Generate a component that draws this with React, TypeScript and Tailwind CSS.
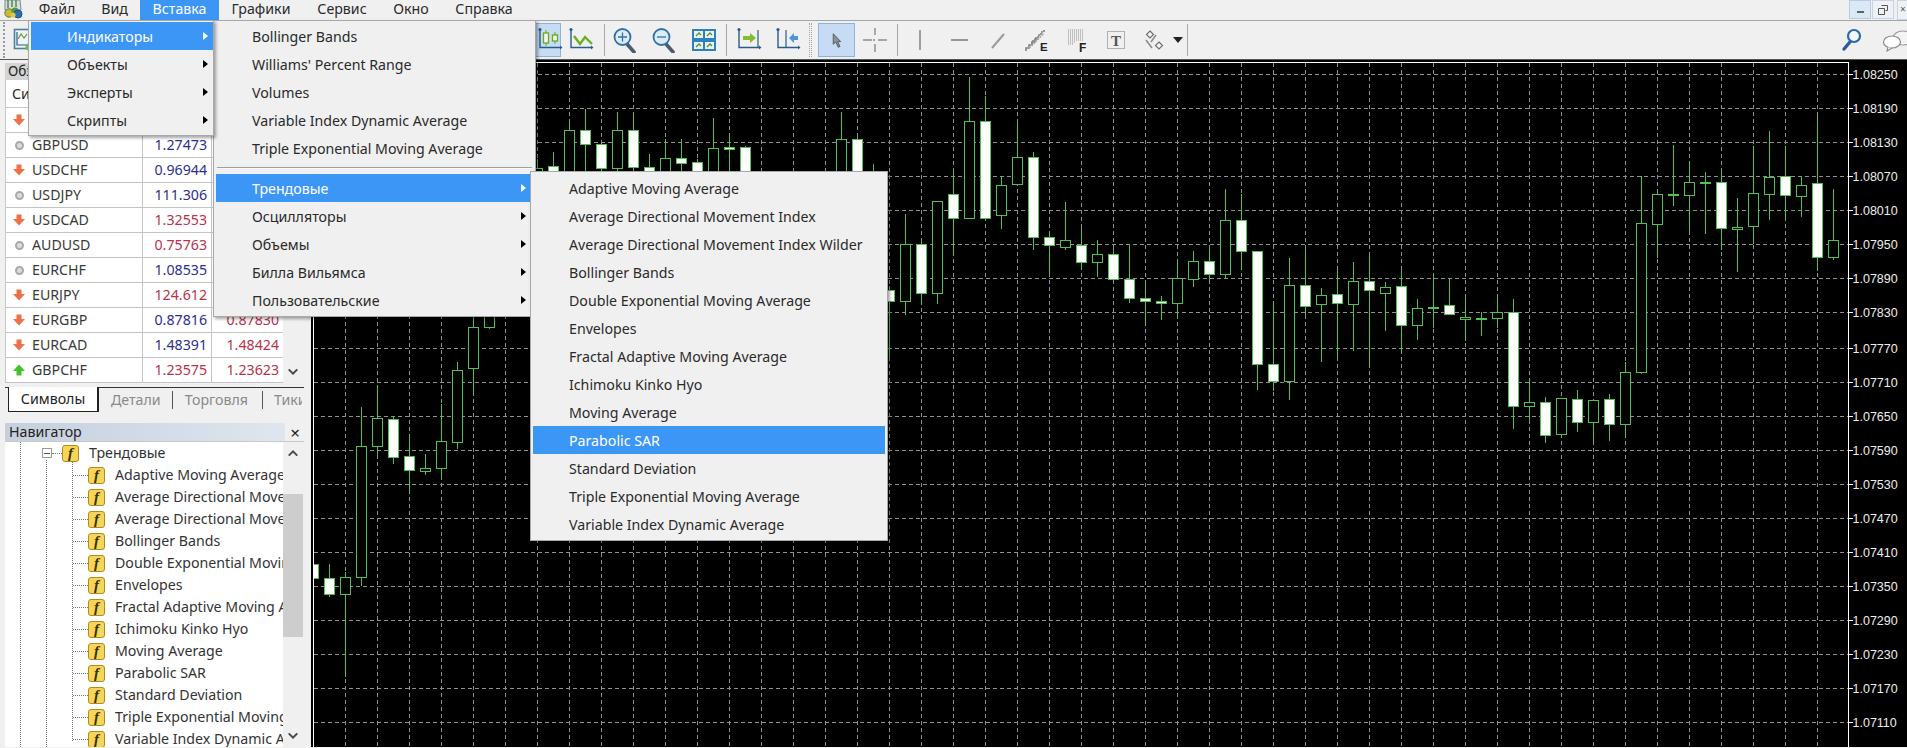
import React from "react";

type C = [number, number, number, number, number, number];
const z6: C[] = [
  [537, 300, 328, 400, 420, 0],[553, 280, 322, 400, 420, 1],[569, 180, 213, 400, 420, 0],[585, 150, 213, 256, 400, 1],
  [601, 250, 256, 328, 360, 1],[617, 160, 213, 328, 360, 0],[633, 165, 213, 325, 360, 1],[649, 285, 325, 400, 420, 1],
  [665, 240, 298, 400, 420, 0],[681, 240, 298, 313, 400, 1],[697, 300, 310, 400, 420, 1],[713, 178, 268, 400, 420, 0],
  [729, 222, 265, 271, 400, 1],[745, 260, 265, 400, 420, 1],[841, 160, 241, 400, 420, 0],[857, 235, 241, 400, 420, 1],
  [873, 315, 400, 420, 440, 0],[473, 740, 805, 928, 1005, 0],[489, 700, 720, 805, 810, 0],[457, 908, 935, 1150, 1170, 0],
];
const z7: C[] = [
  [313, 430, 495, 538, 560, 1],[329, 495, 538, 586, 594, 1],[345, 520, 535, 586, 835, 0],[361, 25, 143, 535, 560, 0],[377, -40, 58, 142, 168, 0],
  [393, 50, 62, 175, 194, 1],[409, 107, 172, 214, 275, 1],[425, 165, 208, 217, 228, 0],[441, 15, 128, 208, 238, 0],
];
const z8: C[] = [
  [889, 680, 695, 727, 900, 1],[905, 465, 556, 727, 768, 0],[921, 545, 556, 703, 738, 1],[937, 427, 427, 703, 735, 0],[953, 328, 406, 478, 592, 1],
  [969, 55, 187, 478, 478, 0],[985, 110, 187, 478, 486, 1],[1001, 350, 379, 469, 510, 0],[1017, 190, 295, 377, 377, 0],[1033, 278, 295, 535, 572, 1],
  [1049, 515, 535, 559, 647, 1],[1065, 430, 544, 566, 572, 0],[1081, 507, 559, 610, 632, 1],[1097, 544, 586, 610, 655, 0],[1113, 570, 586, 661, 664, 1],
  [1129, 556, 661, 718, 732, 1],[1145, 676, 718, 727, 792, 1],[1161, 712, 727, 733, 783, 1],[1177, 604, 658, 733, 772, 0],[1193, 577, 607, 661, 684, 0],
  [1209, 560, 607, 646, 668, 1],[1225, 390, 484, 646, 658, 0],[1241, 406, 484, 577, 632, 1],[1257, 577, 577, 916, 992, 1],[1273, 727, 916, 967, 997, 1],
  [1289, 598, 679, 967, 1022, 0],[1305, 568, 679, 742, 772, 1],[1321, 688, 709, 736, 910, 0],[1337, 634, 706, 733, 898, 1],[1353, 610, 667, 736, 875, 0],
  [1369, 584, 667, 694, 922, 1],[1385, 670, 685, 703, 815, 0],[1401, 634, 682, 799, 885, 1],[1417, 720, 748, 799, 843, 0],[1433, 652, 745, 748, 808, 1],
  [1449, 658, 739, 766, 766, 1],[1465, 712, 775, 781, 845, 0],[1481, 760, 778, 778, 832, 0],[1497, 712, 760, 778, 808, 0],[1513, 720, 760, 1042, 1110, 1],
  [1529, 962, 1030, 1042, 1082, 0],[1545, 1015, 1030, 1129, 1153, 1],[1561, 1018, 1018, 1126, 1130, 0],[1577, 992, 1021, 1090, 1120, 1],[1593, 1024, 1024, 1090, 1150, 0],
  [1609, 1005, 1021, 1096, 1145, 1],[1625, 910, 940, 1096, 1135, 0],[1641, 352, 493, 940, 946, 0],[1657, 390, 406, 496, 598, 0],[1673, 258, 406, 409, 440, 1],
  [1689, 316, 370, 409, 520, 0],[1705, 340, 370, 373, 526, 1],[1721, 334, 370, 508, 574, 1],[1737, 418, 505, 511, 640, 0],[1753, 262, 403, 502, 556, 0],
  [1769, 216, 355, 406, 484, 0],[1785, 262, 352, 409, 487, 1],[1801, 352, 379, 412, 474, 0],[1817, 168, 373, 595, 636, 1],[1833, 390, 544, 596, 604, 0],
];
const candles: C[] = [
  ...z6.map(([x, h, t, b, l, f]): C => [x, 60 + h / 3, 60 + t / 3, 60 + b / 3, 60 + l / 3, f]),
  ...z7.map(([x, h, t, b, l, f]): C => [x, 400 + h / 3, 400 + t / 3, 400 + b / 3, 400 + l / 3, f]),
  ...z8.map(([x, h, t, b, l, f]): C => [x, 60 + h / 3, 60 + t / 3, 60 + b / 3, 60 + l / 3, f]),
];
const gridY = [75, 109, 143, 177, 211, 245, 279, 313, 349, 383, 417, 451, 485, 519, 553, 587, 621, 655, 689, 723];
const prices = ["1.08250","1.08190","1.08130","1.08070","1.08010","1.07950","1.07890","1.07830","1.07770","1.07710","1.07650","1.07590","1.07530","1.07470","1.07410","1.07350","1.07290","1.07230","1.07170","1.07110"];
const gridX = Array.from({ length: 47 }, (_, i) => 345.5 + 32 * i);

function Chart() {
  return (
    <svg viewBox="311 61 1596 687" width="1596" height="687" className="block bg-black">
      <defs><clipPath id="plot"><rect x="314" y="64" width="1534" height="684" /></clipPath></defs>
      <g stroke="#8f8f8f" strokeWidth="1" strokeDasharray="4 3" shapeRendering="crispEdges">
        {gridY.map((y) => <line key={y} x1="314" x2="1848" y1={y + 0.5} y2={y + 0.5} />)}
        {gridX.map((x) => <line key={x} x1={x} x2={x} y1="64" y2="748" />)}
      </g>
      <g clipPath="url(#plot)" shapeRendering="crispEdges">
        {candles.map(([x, h, t, b, l, f]) => (
          <g key={x}>
            <line x1={x + 0.5} x2={x + 0.5} y1={h} y2={l} stroke="#4fc24f" strokeWidth="1" />
            <rect x={x - 4.5} y={t} width="10" height={Math.max(b - t, 1)} fill={f ? "#ffffff" : "#000000"} stroke="#4fc24f" strokeWidth="1" />
          </g>
        ))}
      </g>
      <g stroke="#ffffff" shapeRendering="crispEdges">
        <line x1="313.5" x2="313.5" y1="63" y2="748" />
        <line x1="313" x2="1849" y1="63.5" y2="63.5" />
        <line x1="1848.5" x2="1848.5" y1="63" y2="748" />
        {gridY.map((y) => <line key={y} x1="1848" x2="1853" y1={y + 0.5} y2={y + 0.5} />)}
      </g>
      <g fill="#ededed" fontFamily="'Liberation Sans', sans-serif" fontSize="12.5">
        {gridY.map((y, i) => <text key={y} x="1852.5" y={y + 5}>{prices[i]}</text>)}
      </g>
    </svg>
  );
}

const Axis = () => (
  <g>
    <path d="M3 2.5V20.5H23" fill="none" stroke="#2a5a8f" strokeWidth="1.4" />
    <circle cx="3" cy="2.5" r="1.6" fill="#2a5a8f" />
    <path d="M23 18.5l2.5 2-2.5 2z" fill="#2a5a8f" />
  </g>
);
const Ic = ({ children, w = 26, h = 26 }: { children: React.ReactNode; w?: number; h?: number }) => (
  <svg viewBox={`0 0 ${w} ${h}`} width={w} height={h}>{children}</svg>
);
const CandleIc = () => (
  <Ic><Axis />
    <path d="M9 3v3M9 16v3M18 5v3M18 14v3" stroke="#69a81f" />
    <rect x="6.5" y="6" width="5" height="10" fill="#f4fae8" stroke="#69a81f" strokeWidth="1.3" />
    <rect x="15.5" y="8" width="5" height="6" fill="#f4fae8" stroke="#69a81f" strokeWidth="1.3" />
  </Ic>
);
const LineIc = () => (
  <Ic><Axis /><path d="M6 9l6 8 5-7 7 7" fill="none" stroke="#69b01f" strokeWidth="2.4" /></Ic>
);
const ZoomIc = ({ plus }: { plus?: boolean }) => (
  <Ic>
    <path d="M15 17l7 8" stroke="#4c5c6e" strokeWidth="3.6" strokeLinecap="round" />
    <circle cx="10.5" cy="10" r="8" fill="#dcebf8" stroke="#2f70a8" strokeWidth="1.8" />
    <path d={plus ? "M6 10h9M10.5 5.5v9" : "M6 10h9"} stroke="#2f70a8" strokeWidth="1.3" />
  </Ic>
);
const TileIc = () => (
  <Ic>
    <rect x="1" y="2" width="24" height="22" fill="#2f82c0" />
    <rect x="3" y="4" width="9" height="7" fill="#e8f3f7" /><rect x="14" y="4" width="9" height="7" fill="#e8f3f7" />
    <rect x="3" y="15" width="9" height="7" fill="#e8f3f7" /><rect x="14" y="15" width="9" height="7" fill="#e8f3f7" />
    <path d="M5 9l3-3 2 2M16 9l3-3 2 2M5 20l3-3 2 2M16 20l3-3 2 2" fill="none" stroke="#55902a" strokeWidth="1.3" />
  </Ic>
);
const ShiftIc = () => (
  <Ic><Axis /><path d="M22 3v17" stroke="#2a5a8f" strokeWidth="1.2" /><path d="M7 9h7V6l6 5-6 5v-3H7z" fill="#84bd2d" /></Ic>
);
const ScrollIc = () => (
  <Ic><Axis /><path d="M11 3v17" stroke="#2a5a8f" strokeWidth="1.2" /><path d="M23 9h-4V6l-5 5 5 5v-3h4z" fill="#4d96d9" /></Ic>
);
const CursorIc = () => (
  <svg viewBox="0 0 16 22" width="12" height="17"><path d="M3 2v14l3.5-3 3 7 2.5-1-3-6.5H13z" fill="#8a9199" stroke="#4f565e" strokeWidth="1.2" /></svg>
);
const CrossIc = () => (
  <Ic><path d="M13 1v7M13 17v8M1 13h9M16 13h9" stroke="#8b8b8b" strokeWidth="1.4" /><path d="M11 13h2" stroke="#8b8b8b" strokeWidth="1.4" /></Ic>
);
const FuncIcon = () => (
  <span className="flex h-[17px] w-[17px] shrink-0 items-center justify-center rounded-[3px] border border-[#b58a16] bg-[#f5d65a] [font-family:'Liberation_Serif',serif] text-[15px] font-bold italic leading-none text-[#3a3000]">f</span>
);

const Sep = () => <span className="mx-auto block h-[32px] w-px bg-[#a8a8a8]" />;
const Slot = ({ w, children }: { w: string; children?: React.ReactNode }) => (
  <div className={`flex h-[34px] shrink-0 items-center justify-center ${w}`}>{children}</div>
);

function Toolbar() {
  return (
    <div className="flex h-[39px] items-center border-t border-[#a6a6a6] bg-[#f0f0f0]">
      <span className="ml-[3px] block h-[36px] w-0 shrink-0 border-l-2 border-dotted border-[#9a9a9a]" />
      <div className="ml-[8px] shrink-0">
        <svg viewBox="0 0 19 24" width="19" height="24">
          <rect x="1.5" y="1.5" width="15" height="19" fill="#eef4f8" stroke="#4f7f9e" strokeWidth="1.6" />
          <path d="M4 4v13h10" fill="none" stroke="#2a5a8f" strokeWidth="1.2" />
          <path d="M5 11l3-5 3 4 3-4" fill="none" stroke="#5f9a2a" strokeWidth="1.2" />
          <circle cx="16" cy="19" r="3.5" fill="#6cbf3a" />
        </svg>
      </div>
      <div className="w-[493px] shrink-0" />
      <Slot w="w-[36px] border border-[#8fb4dc] bg-[#c6dcf4]"><div className="ml-[14px]"><CandleIc /></div></Slot>
      <Slot w="w-[40px]"><LineIc /></Slot>
      <Slot w="w-[6px]"><Sep /></Slot>
      <Slot w="w-[36px]"><ZoomIc plus /></Slot>
      <Slot w="w-[42px]"><ZoomIc /></Slot>
      <Slot w="w-[38px]"><TileIc /></Slot>
      <Slot w="w-[6px]"><Sep /></Slot>
      <Slot w="w-[40px]"><ShiftIc /></Slot>
      <Slot w="w-[38px]"><ScrollIc /></Slot>
      <Slot w="w-[6px]"><span className="block h-[34px] w-[3px] border-l border-r border-dotted border-[#a8a8a8]" /></Slot>
      <div className="w-[5px] shrink-0" />
      <Slot w="w-[37px] border border-[#8fb4dc] bg-[#c6dcf4]"><CursorIc /></Slot>
      <Slot w="w-[40px]"><CrossIc /></Slot>
      <Slot w="w-[4px]"><Sep /></Slot>
      <Slot w="w-[42px]"><span className="block h-[20px] w-[2px] bg-[#a0a0a0]" /></Slot>
      <Slot w="w-[36px]"><span className="block h-[2px] w-[17px] bg-[#969696]" /></Slot>
      <Slot w="w-[42px]"><Ic><path d="M7 21L19 7" stroke="#9a9a9a" strokeWidth="2" /></Ic></Slot>
      <Slot w="w-[38px]">
        <Ic>
          <path d="M1 24v-3h3v-3h3v-3h3v-3h3" fill="none" stroke="#808080" strokeWidth="1.6" />
          <path d="M7 17v-3h3v-3h3V8h3V5h3V2" fill="none" stroke="#808080" strokeWidth="1.6" strokeDasharray="2 1" />
          <path d="M4 21L19 6" stroke="#a8a8a8" strokeWidth="2" strokeDasharray="2 1" />
          <text x="15" y="24" fontSize="11.5" fontWeight="700" fontFamily="'Liberation Sans', sans-serif" fill="#222">E</text>
        </Ic>
      </Slot>
      <Slot w="w-[39px]">
        <Ic>
          <path d="M4 3h15M4 5h15M4 7h15M4 9h15M4 11h15M4 13h15M4 15h8M4 17h6" stroke="#8f8f8f" strokeDasharray="1 1" />
          <text x="15" y="25" fontSize="12" fontWeight="700" fontFamily="'Liberation Sans', sans-serif" fill="#222">F</text>
        </Ic>
      </Slot>
      <Slot w="w-[40px]">
        <Ic>
          <rect x="4.5" y="4.5" width="17" height="17" fill="none" stroke="#707070" strokeDasharray="1 1" />
          <text x="13" y="18.5" textAnchor="middle" fontSize="15" fontWeight="700" fontFamily="'Liberation Serif', serif" fill="#555">T</text>
        </Ic>
      </Slot>
      <Slot w="w-[36px]">
        <Ic>
          <path d="M9 4l3.5 3.5L9 11 5.500 7.500zM18 15l3.500 3.500L18 22l-3.500-3.500z" fill="#f4f4f4" stroke="#6f6f6f" strokeWidth="1.2" />
          <path d="M5 13l6 8M15 8l-5 7" stroke="#8a8a8a" strokeWidth="1.5" />
        </Ic>
      </Slot>
      <Slot w="w-[12px]"><span className="block h-0 w-0 border-x-[5px] border-t-[6px] border-x-transparent border-t-[#222]" /></Slot>
      <Slot w="w-[6px]"><Sep /></Slot>
      <div className="flex-1" />
      <div className="shrink-0">
        <Ic>
          <path d="M11 15l-6 7" stroke="#2c5a9a" strokeWidth="3.4" strokeLinecap="round" />
          <circle cx="15" cy="9" r="6" fill="#f4f8fb" stroke="#2c68ac" strokeWidth="2.2" />
        </Ic>
      </div>
      <div className="w-[17px] shrink-0" />
      <div className="w-[25px] shrink-0 overflow-hidden">
        <svg viewBox="0 0 34 24" width="34" height="24">
          <ellipse cx="21" cy="10" rx="10" ry="7" fill="#f4f4f4" stroke="#9a9a9a" strokeWidth="1.2" />
          <ellipse cx="10" cy="14" rx="8.5" ry="6" fill="#ffffff" stroke="#8a8a8a" strokeWidth="1.2" />
          <path d="M6 19l-1 4 5-3" fill="#fff" stroke="#8a8a8a" strokeWidth="1.1" />
        </svg>
      </div>
    </div>
  );
}

function MenuBar() {
  const items = [
    { t: "Файл", w: "w-[64px]" },
    { t: "Вид", w: "w-[51px]" },
    { t: "Вставка", w: "w-[79px] bg-[#3c96f5] text-white" },
    { t: "Графики", w: "w-[84px]" },
    { t: "Сервис", w: "w-[78px]" },
    { t: "Окно", w: "w-[60px]" },
    { t: "Справка", w: "w-[86px]" },
  ];
  return (
    <div className="flex h-[20px] items-stretch bg-[#f0f0f0] text-[14.2px] leading-[17px] text-[#2a2a2a]">
      <div className="w-[25px] shrink-0">
        <svg viewBox="0 0 26 20" width="26" height="20">
          <path d="M5 0h15l1 10H5z" fill="#d8dde0" stroke="#7c8790" strokeWidth="1" />
          <path d="M8 0v8M12 0v7M16 0v7" stroke="#5c8f50" strokeWidth="1.6" />
          <circle cx="9" cy="13" r="4.2" fill="#c9b93a" stroke="#5f7f3a" />
          <circle cx="15" cy="11" r="3.600" fill="#4f9a3a" />
          <circle cx="18" cy="14" r="4" fill="#2e6fb0" stroke="#244f80" />
          <circle cx="13" cy="15" r="2.600" fill="#e0c93f" />
        </svg>
      </div>
      {items.map((m) => (
        <div key={m.t} className={`flex shrink-0 justify-center ${m.w}`}>{m.t}</div>
      ))}
      <div className="flex-1" />
      <div className="flex h-[19px] w-[22px] items-center justify-center border border-[#b8cbe0] bg-[#dbe8f5] text-[#555]"><span className="mt-[5px] block h-[2px] w-[7px] bg-[#566]" /></div>
      <div className="ml-[1px] flex h-[19px] w-[22px] items-center justify-center border border-[#c8d4e0] bg-[#eef2f6]">
        <svg viewBox="0 0 10 10" width="10" height="10"><path d="M3.5 .5h6v5h-2M.5 3.5h6v6h-6z" fill="none" stroke="#555" /></svg>
      </div>
      <div className="ml-[3px] w-[10px] overflow-hidden border-y border-l border-[#c8d4e0] bg-[#eef2f6] pl-[2px] text-[10px] leading-[16px] text-[#555]">×</div>
    </div>
  );
}

const IndRow = ({ children, h = false, arrow = false, w }: { children: React.ReactNode; h?: boolean; arrow?: boolean; w: string }) => (
  <div className={`flex h-[28px] items-center justify-between ${h ? "bg-[#3c96f5] text-white" : "text-[#2a2a2a]"} ${w}`}>
    <span className="whitespace-nowrap pt-[2px]">{children}</span>
    {arrow && <span className={`mr-[5px] block h-0 w-0 border-y-[4.5px] border-l-[5px] border-y-transparent ${h ? "border-l-white" : "border-l-black"}`} />}
  </div>
);
const MenuBox = ({ className, children }: { className: string; children: React.ReactNode }) => (
  <div className={`absolute z-10 border border-[#a8a8a8] bg-[#f0f0f0] text-[14.2px] shadow-[2px_2px_3px_rgba(0,0,0,0.35)] ${className}`}>{children}</div>
);

function Menus() {
  return (
    <>
      <MenuBox className="left-[28px] top-[20px] h-[116px] w-[186px] pl-[2px] pt-[1px]">
        {["Индикаторы", "Объекты", "Эксперты", "Скрипты"].map((t, i) => (
          <IndRow key={t} h={i === 0} arrow w="w-[182px] pl-[36px]">{t}</IndRow>
        ))}
      </MenuBox>
      <MenuBox className="left-[213px] top-[20px] z-[9] h-[297px] w-[323px] pl-[2px] pt-[1px]">
        {["Bollinger Bands", "Williams' Percent Range", "Volumes", "Variable Index Dynamic Average", "Triple Exponential Moving Average"].map((t) => (
          <IndRow key={t} w="w-[315px] pl-[36px]">{t}</IndRow>
        ))}
        <div className="my-[5px] ml-[1px] h-[2px] w-[315px] border-t border-[#a0a0a0] bg-[#f8f8f8]" />
        {["Трендовые", "Осцилляторы", "Объемы", "Билла Вильямса", "Пользовательские"].map((t, i) => (
          <IndRow key={t} h={i === 0} arrow w="w-[315px] pl-[36px]">{t}</IndRow>
        ))}
      </MenuBox>
      <MenuBox className="left-[530px] top-[171px] z-20 h-[370px] w-[358px] pl-[2px] pt-[2px]">
        {["Adaptive Moving Average", "Average Directional Movement Index", "Average Directional Movement Index Wilder", "Bollinger Bands", "Double Exponential Moving Average", "Envelopes", "Fractal Adaptive Moving Average", "Ichimoku Kinko Hyo", "Moving Average", "Parabolic SAR", "Standard Deviation", "Triple Exponential Moving Average", "Variable Index Dynamic Average"].map((t, i) => (
          <IndRow key={i} h={t === "Parabolic SAR"} w="w-[352px] pl-[36px]">{t}</IndRow>
        ))}
      </MenuBox>
    </>
  );
}

const Down = () => <svg viewBox="0 0 14 14" width="14" height="14"><path d="M2 4l5 5 5-5-1.4-1.3L7 6.3 3.4 2.7z" fill="#4a4a4a" /></svg>;
const Dot = ({ k }: { k: string }) =>
  k === "g" ? (
    <span className="block h-[9px] w-[9px] rounded-full border-2 border-[#a9a9a9] bg-[#dcdcdc]" />
  ) : (
    <svg viewBox="0 0 12 12" width="12" height="12">
      <path d={k === "r" ? "M3.500 .5h5V5H12L6 11.500 0 5h3.500z" : "M3.500 11.500h5V7H12L6 .5 0 7h3.500z"} fill={k === "r" ? "#ea7148" : "#45c02c"} />
    </svg>
  );

const B = "text-[#2b2f8f]", R = "text-[#b8334a]";
const rows: [string, string, string, string, string, string][] = [
  ["r", "", "", B, "", R],
  ["g", "GBPUSD", "1.27473", B, "", B],
  ["r", "USDCHF", "0.96944", B, "", B],
  ["g", "USDJPY", "111.306", B, "", B],
  ["r", "USDCAD", "1.32553", R, "", R],
  ["g", "AUDUSD", "0.75763", R, "", R],
  ["g", "EURCHF", "1.08535", B, "", B],
  ["r", "EURJPY", "124.612", R, "", R],
  ["r", "EURGBP", "0.87816", B, "0.87830", R],
  ["r", "EURCAD", "1.48391", B, "1.48424", R],
  ["u", "GBPCHF", "1.23575", R, "1.23623", R],
];

function MarketWatch() {
  return (
    <div className="ml-[5px] w-[299px] text-[14.2px]">
      <div className="flex h-[17px] items-center bg-[#d4d4d4] pl-[3px] text-[13.5px] text-[#222]">Обзор</div>
      <div className="flex">
        <div className="w-[278px] border-l border-[#c8c8c8] bg-white">
          <div className="flex h-[28px] items-center border-b border-[#c8c8c8] pl-[6px] text-[#2a2a2a]">Символ</div>
          {rows.map(([k, s, bid, bc, ask, ac], i) => (
            <div key={i} className="grid h-[25px] grid-cols-[137px_69px_71px] items-center border-b border-[#c4c4c4] leading-none text-[#3a3a3a]">
              <span className="flex h-full items-center gap-[7px] border-r border-[#c4c4c4] pl-[7px]">
                <span className="flex w-[12px] justify-center"><Dot k={k} /></span>{s}
              </span>
              <span className={`flex h-full items-center justify-end border-r border-[#c4c4c4] pr-[4px] ${bc}`}>{bid}</span>
              <span className={`pr-[4px] text-right ${ac}`}>{ask}</span>
            </div>
          ))}
        </div>
        <div className="flex w-[20px] flex-col items-center justify-end pb-[3px]"><Down /></div>
      </div>
      <div className="mt-[4px] flex h-[25px] items-center border-t border-[#333] text-[14.2px] text-[#8a8a8a]">
        <div className="-mt-px ml-[3px] flex h-[25px] w-[91px] items-center justify-center border border-r-2 border-t-0 border-[#222] bg-white text-[#222]">Символы</div>
        <span className="ml-[12px]">Детали</span>
        <span className="ml-[11px] h-[18px] w-px bg-[#555]" />
        <span className="ml-[12px]">Торговля</span>
        <span className="ml-[14px] h-[18px] w-px bg-[#555]" />
        <span className="ml-[11px] w-[28px] overflow-hidden">Тики</span>
      </div>
    </div>
  );
}

const navItems = ["Adaptive Moving Average", "Average Directional Movement Index", "Average Directional Movement Index Wilder", "Bollinger Bands", "Double Exponential Moving Average", "Envelopes", "Fractal Adaptive Moving Average", "Ichimoku Kinko Hyo", "Moving Average", "Parabolic SAR", "Standard Deviation", "Triple Exponential Moving Average", "Variable Index Dynamic Average"];

function Navigator() {
  return (
    <div className="ml-[5px] mt-[11px] flex min-h-0 w-[299px] flex-1 flex-col overflow-hidden text-[14.2px] text-[#333]">
      <div className="flex h-[18px] shrink-0 items-center justify-between">
        <div className="flex h-full w-[280px] items-center bg-gradient-to-r from-[#c5cfdd] to-[#dfe6ef] pl-[4px] text-[#222]">Навигатор</div>
        <span className="mr-[4px] text-[17px] leading-none text-[#222]">×</span>
      </div>
      <div className="flex min-h-0 flex-1 border-t border-[#c8c8c8]">
        <div className="relative w-[278px] overflow-hidden bg-white">
          <span className="absolute bottom-0 left-[15px] top-0 border-l border-dotted border-[#777]" />
          <span className="absolute bottom-0 left-[41px] top-[18px] border-l border-dotted border-[#777]" />
          <span className="absolute left-[67px] top-[20px] h-[279px] border-l border-dotted border-[#777]" />
          <div className="flex h-[22px] items-center pl-[37px]">
            <span className="z-[1] flex h-[10px] w-[10px] shrink-0 items-center justify-center border border-[#999] bg-white"><span className="block h-px w-[6px] bg-[#555]" /></span>
            <span className="w-[10px] shrink-0 border-t border-dotted border-[#777]" />
            <FuncIcon />
            <span className="ml-[10px]">Трендовые</span>
          </div>
          {navItems.map((t, i) => (
            <div key={i} className="flex h-[22px] items-center whitespace-nowrap pl-[68px]">
              <span className="w-[15px] shrink-0 border-t border-dotted border-[#777]" />
              <FuncIcon />
              <span className="ml-[10px]">{t}</span>
            </div>
          ))}
        </div>
        <div className="relative flex w-[20px] flex-col items-center bg-[#f0f0f0] pt-[3px]">
          <span className="rotate-180"><Down /></span>
          <div className="mt-[35px] h-[143px] w-full bg-[#cdcdcd]" />
          <div className="flex-1" />
          <span className="mb-[3px]"><Down /></span>
        </div>
      </div>
    </div>
  );
}

export default function App() {
  return (
    <div className="relative flex h-[748px] w-[1907px] flex-col overflow-hidden bg-[#f0f0f0] [font-family:'Noto_Sans',sans-serif]">
      <MenuBar />
      <Toolbar />
      <div className="flex h-px bg-[#555]" />
      <div className="flex min-h-0 flex-1">
        <div className="flex h-[687px] w-[311px] shrink-0 flex-col pt-[3px]">
          <MarketWatch />
          <Navigator />
        </div>
        <Chart />
      </div>
      <Menus />
    </div>
  );
}
